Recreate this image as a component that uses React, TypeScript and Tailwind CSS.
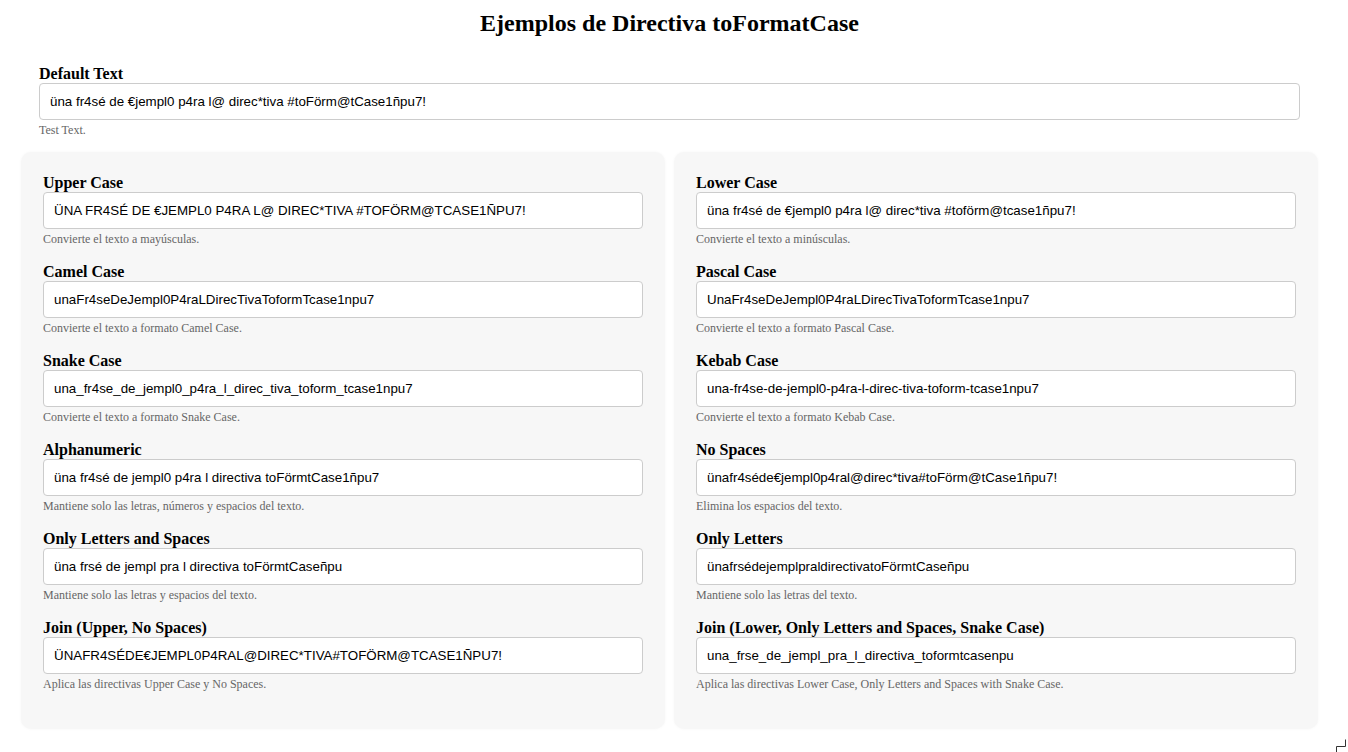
import React from "react";

type Item = { label: string; value: string; desc: string };

const left: Item[] = [
  { label: "Upper Case", value: "ÜNA FR4SÉ DE €JEMPL0 P4RA L@ DIREC*TIVA #TOFÖRM@TCASE1ÑPU7!", desc: "Convierte el texto a mayúsculas." },
  { label: "Camel Case", value: "unaFr4seDeJempl0P4raLDirecTivaToformTcase1npu7", desc: "Convierte el texto a formato Camel Case." },
  { label: "Snake Case", value: "una_fr4se_de_jempl0_p4ra_l_direc_tiva_toform_tcase1npu7", desc: "Convierte el texto a formato Snake Case." },
  { label: "Alphanumeric", value: "üna fr4sé de jempl0 p4ra l directiva toFörmtCase1ñpu7", desc: "Mantiene solo las letras, números y espacios del texto." },
  { label: "Only Letters and Spaces", value: "üna frsé de jempl pra l directiva toFörmtCaseñpu", desc: "Mantiene solo las letras y espacios del texto." },
  { label: "Join (Upper, No Spaces)", value: "ÜNAFR4SÉDE€JEMPL0P4RAL@DIREC*TIVA#TOFÖRM@TCASE1ÑPU7!", desc: "Aplica las directivas Upper Case y No Spaces." },
];

const right: Item[] = [
  { label: "Lower Case", value: "üna fr4sé de €jempl0 p4ra l@ direc*tiva #toförm@tcase1ñpu7!", desc: "Convierte el texto a minúsculas." },
  { label: "Pascal Case", value: "UnaFr4seDeJempl0P4raLDirecTivaToformTcase1npu7", desc: "Convierte el texto a formato Pascal Case." },
  { label: "Kebab Case", value: "una-fr4se-de-jempl0-p4ra-l-direc-tiva-toform-tcase1npu7", desc: "Convierte el texto a formato Kebab Case." },
  { label: "No Spaces", value: "ünafr4séde€jempl0p4ral@direc*tiva#toFörm@tCase1ñpu7!", desc: "Elimina los espacios del texto." },
  { label: "Only Letters", value: "ünafrsédejemplpraldirectivatoFörmtCaseñpu", desc: "Mantiene solo las letras del texto." },
  { label: "Join (Lower, Only Letters and Spaces, Snake Case)", value: "una_frse_de_jempl_pra_l_directiva_toformtcasenpu", desc: "Aplica las directivas Lower Case, Only Letters and Spaces with Snake Case." },
];

const serif = "font-['Liberation_Serif',serif]";
const sans = "font-['Liberation_Sans',Arial,sans-serif]";

function Field({ item }: { item: Item }) {
  return (
    <div className="mb-[15px]">
      <div className={`${serif} h-[20px] text-[16px] leading-[22px] font-bold text-black`}>{item.label}</div>
      <input
        readOnly
        value={item.value}
        className={`${sans} block w-full h-[37px] px-[10px] text-[13.33px] text-black bg-white border border-[#cccccc] rounded-[4px] outline-none`}
      />
      <div className={`${serif} mt-[3px] text-[12px] leading-[14px] text-[#666666]`}>{item.desc}</div>
    </div>
  );
}

function Panel({ items }: { items: Item[] }) {
  return (
    <div className="w-[644px] bg-[#f7f7f7] rounded-[10px] px-[22px] pt-[20px] pb-[23px] shadow-[0_0_3px_rgba(0,0,0,0.04)]">
      {items.map((it) => (
        <Field key={it.label} item={it} />
      ))}
    </div>
  );
}

export default function App() {
  return (
    <div className="relative w-[1348px] h-[752px] bg-white overflow-hidden">
      <div className="w-[1339px]">
        <h1 className={`${serif} pt-[7px] text-center text-[24px] leading-[32px] font-bold text-black`}>
          Ejemplos de Directiva toFormatCase
        </h1>
        <div className="mx-[39px] mt-[24px] mb-[15px]">
          <div className={`${serif} h-[20px] text-[16px] leading-[22px] font-bold text-black`}>Default Text</div>
          <input
            readOnly
            value="üna fr4sé de €jempl0 p4ra l@ direc*tiva #toFörm@tCase1ñpu7!"
            className={`${sans} block w-full h-[37px] px-[10px] text-[13.33px] text-black bg-white border border-[#cccccc] rounded-[4px] outline-none`}
          />
          <div className={`${serif} mt-[3px] text-[12px] leading-[14px] text-[#666666]`}>Test Text.</div>
        </div>
        <div className="mx-[21px] flex gap-[9px]">
          <Panel items={left} />
          <Panel items={right} />
        </div>
      </div>
      <svg className="absolute right-0 bottom-0" width="14" height="14" viewBox="0 0 14 14">
        <path d="M11.5 1.5 V8.5 H2.5 V14" fill="none" stroke="#333" strokeWidth="1" />
      </svg>
    </div>
  );
}
